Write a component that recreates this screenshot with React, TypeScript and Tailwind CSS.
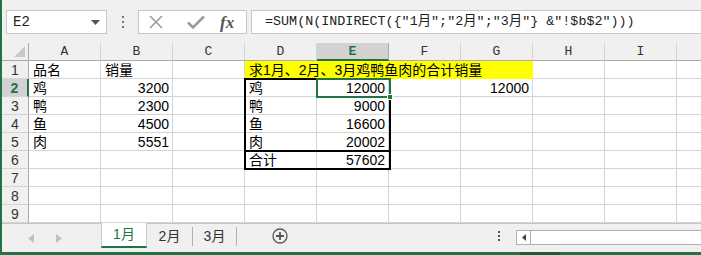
import React from "react";

const cols = ["A", "B", "C", "D", "E", "F", "G", "H", "I", "J"];

type Cell = { text?: string; right?: boolean };

const formula = '=SUM(N(INDIRECT({"1月";"2月";"3月"} &"!$b$2")))';

// rows 1..9, keyed by column letter
const data: Record<number, Record<string, Cell>> = {
  2: { A: { text: "鸡" }, B: { text: "3200", right: true }, D: { text: "鸡" }, E: { text: "12000", right: true }, G: { text: "12000", right: true } },
  3: { A: { text: "鸭" }, B: { text: "2300", right: true }, D: { text: "鸭" }, E: { text: "9000", right: true } },
  4: { A: { text: "鱼" }, B: { text: "4500", right: true }, D: { text: "鱼" }, E: { text: "16600", right: true } },
  5: { A: { text: "肉" }, B: { text: "5551", right: true }, D: { text: "肉" }, E: { text: "20002", right: true } },
  6: { D: { text: "合计" }, E: { text: "57602", right: true } },
};

const cellFont = { fontFamily: '"Liberation Sans", "Noto Sans CJK SC", sans-serif' };

function GridCell({ cell }: { cell?: Cell }) {
  return (
    <div
      className={`w-[72px] h-[18px] shrink-0 border-r border-b border-[#d4d4d4] flex items-center text-[14px] text-black leading-none ${
        cell?.right ? "justify-end pr-[3px]" : "pl-[4px]"
      }`}
    >
      {cell?.text}
    </div>
  );
}

function TopBar() {
  return (
    <div className="h-[43px] flex items-center bg-[#f0f0f0] pl-[4px] pt-[1px]">
      {/* name box */}
      <div className="w-[101px] h-[24px] bg-white border border-[#c6c6c6] flex items-center justify-between pl-[6px] pr-[6px]">
        <span className="text-[14px] text-[#222]" style={{ fontFamily: '"Liberation Mono", monospace' }}>
          E2
        </span>
        <svg width="9" height="5" viewBox="0 0 9 5">
          <path d="M0 0h9L4.5 5z" fill="#555" />
        </svg>
      </div>
      <div className="w-[31px] flex flex-col items-center gap-[3px]">
        <span className="w-[2px] h-[2px] bg-[#777]" />
        <span className="w-[2px] h-[2px] bg-[#777]" />
        <span className="w-[2px] h-[2px] bg-[#777]" />
      </div>
      {/* cancel / enter / fx */}
      <div className="w-[109px] h-[24px] bg-white border border-[#c6c6c6] flex items-center pl-[9px]">
        <svg width="16" height="16" viewBox="0 0 16 16">
          <path d="M2 2L14 14M14 2L2 14" stroke="#9b9b9b" strokeWidth="1.6" />
        </svg>
        <svg width="20" height="16" viewBox="0 0 20 16" className="ml-[22px]">
          <path d="M2 8.5L7 13.5L18 2.5" stroke="#9b9b9b" strokeWidth="2.6" fill="none" />
        </svg>
        <span
          className="ml-[14px] text-[17px] italic font-bold text-[#555] leading-none"
          style={{ fontFamily: '"Liberation Serif", serif' }}
        >
          fx
        </span>
      </div>
      <div className="ml-[4px] flex-1 h-[24px] bg-white border border-[#c6c6c6] border-r-0 flex items-center pl-[13px]">
        <span
          className="text-[13.4px] text-[#222] whitespace-nowrap"
          style={{ fontFamily: '"Liberation Mono", "Noto Sans CJK SC", monospace' }}
        >
          {formula}
        </span>
      </div>
    </div>
  );
}

function Sheet() {
  const rows = [1, 2, 3, 4, 5, 6, 7, 8, 9];
  return (
    <div className="relative h-[180px] overflow-hidden">
      {/* column headers */}
      <div className="flex bg-[#f0f0f0] h-[18px]">
        <div className="w-[27px] h-[18px] shrink-0 border-r border-b border-[#ababab] flex items-end justify-end pr-[3px] pb-[3px]">
          <svg width="11" height="11" viewBox="0 0 11 11">
            <path d="M11 0V11H0z" fill="#c8c8c8" />
          </svg>
        </div>
        {cols.map((c) => (
          <div
            key={c}
            className={`w-[72px] h-[18px] shrink-0 border-r flex items-center justify-center text-[13px] leading-none ${
              c === "E"
                ? "bg-[#d2d2d2] border-[#ababab] border-b-2 border-b-[#217346] text-[#217346] font-bold"
                : "border-[#d4d4d4] border-b border-b-[#ababab] text-[#333]"
            }`}
            style={{ fontFamily: '"Liberation Mono", monospace' }}
          >
            {c === "J" ? "" : c}
          </div>
        ))}
      </div>

      {rows.map((r) => (
        <div key={r} className="flex h-[18px]" style={cellFont}>
          <div
            className={`w-[27px] h-[18px] shrink-0 border-b border-[#d4d4d4] flex items-center justify-center text-[14px] leading-none ${
              r === 2
                ? "bg-[#d2d2d2] border-r-2 border-r-[#217346] text-[#217346] font-bold"
                : "bg-[#f0f0f0] border-r border-r-[#ababab] text-[#333]"
            }`}
          >
            {r}
          </div>
          {r === 1 ? (
            <>
              <GridCell cell={{ text: "品名" }} />
              <GridCell cell={{ text: "销量" }} />
              <GridCell />
              <div className="w-[288px] h-[18px] shrink-0 bg-[#ffff00] flex items-center pl-[4px] text-[14px] leading-none whitespace-nowrap">
                求1月、2月、3月鸡鸭鱼肉的合计销量
              </div>
              <GridCell />
              <GridCell />
              <GridCell />
            </>
          ) : (
            cols.map((c) => <GridCell key={c} cell={data[r]?.[c]} />)
          )}
        </div>
      ))}

      {/* thick range border D2:E6 */}
      <div className="absolute left-[242px] top-[35px] w-[147px] h-[92px] border-2 border-black pointer-events-none" />
      <div className="absolute left-[242px] top-[107px] w-[147px] h-[2px] bg-black" />
      {/* active cell E2 */}
      <div className="absolute left-[314px] top-[35px] w-[75px] h-[20px] border-2 border-[#217346]" />
      <div className="absolute left-[385px] top-[51px] w-[6px] h-[6px] bg-[#217346] border border-white" />
    </div>
  );
}

function TabBar() {
  return (
    <div className="h-[29px] bg-[#f0f0f0] border-t border-[#c6c6c6] flex items-stretch">
      <div className="w-[99px] flex items-center gap-[22px] pl-[26px]">
        <svg width="6" height="9" viewBox="0 0 6 9">
          <path d="M6 0V9L0 4.5z" fill="#c0c0c0" />
        </svg>
        <svg width="6" height="9" viewBox="0 0 6 9">
          <path d="M0 0V9L6 4.5z" fill="#c0c0c0" />
        </svg>
      </div>
      <div className="-mt-px w-[46px] h-[25px] bg-white border-x border-[#c6c6c6] border-b-2 border-b-[#217346] flex items-center justify-center text-[14px] text-[#217346]" style={cellFont}>
        1月
      </div>
      <div className="w-[45px] h-[24px] flex items-center justify-center text-[14px] text-[#333]" style={cellFont}>
        2月
      </div>
      <div className="w-px h-[19px] mt-[3px] bg-[#b0b0b0]" />
      <div className="w-[43px] h-[24px] flex items-center justify-center text-[14px] text-[#333]" style={cellFont}>
        3月
      </div>
      <div className="w-px h-[19px] mt-[3px] bg-[#b0b0b0]" />
      <div className="w-[85px] h-[24px] flex items-center justify-center">
        <svg width="16" height="16" viewBox="0 0 16 16">
          <circle cx="8" cy="8" r="7" fill="none" stroke="#555" strokeWidth="1.3" />
          <path d="M8 4V12M4 8H12" stroke="#555" strokeWidth="1.8" />
        </svg>
      </div>
      <div className="flex-1 h-[24px] flex items-center justify-end pr-[16px]">
        <div className="flex flex-col gap-[2px]">
          <span className="w-[2px] h-[2px] bg-[#555]" />
          <span className="w-[2px] h-[2px] bg-[#555]" />
          <span className="w-[2px] h-[2px] bg-[#555]" />
        </div>
      </div>
      <div className="w-[185px] h-[15px] mt-[6px] bg-white border border-[#b0b0b0] border-r-0 flex">
        <div className="w-[14px] h-full border-r border-[#b0b0b0] flex items-center justify-center">
          <svg width="4" height="7" viewBox="0 0 4 7">
            <path d="M4 0V7L0 3.5z" fill="#444" />
          </svg>
        </div>
      </div>
    </div>
  );
}

export default function App() {
  return (
    <div className="w-[701px] h-[255px] overflow-hidden bg-white border-l-2 border-[#217346] flex flex-col">
      <TopBar />
      <Sheet />
      <TabBar />
      <div className="flex-1 bg-[#217346] flex">
        <div className="ml-[518px] w-[40px] bg-[#1a5c38]" />
      </div>
    </div>
  );
}
